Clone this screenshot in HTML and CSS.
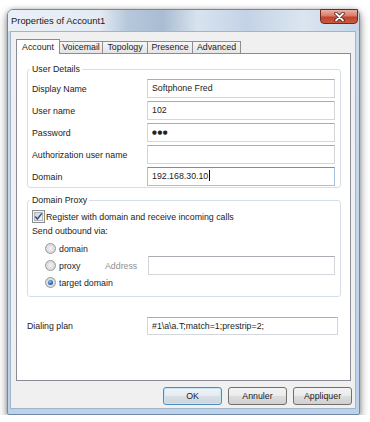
FILE: index.html
```html
<!DOCTYPE html>
<html>
<head>
<meta charset="utf-8">
<link rel="stylesheet" href="styles.css">
</head>
<body>
<div class="window">
  <div class="titlebar">
    <span class="title">Properties of Account1</span>
    <div class="close">
      <svg width="13" height="10" viewBox="0 0 13 10"><path d="M3 1.5 L10 8.5 M10 1.5 L3 8.5" stroke="#4a1a12" stroke-width="3.4" stroke-linecap="round" fill="none"/><path d="M3 1.5 L10 8.5 M10 1.5 L3 8.5" stroke="#ffffff" stroke-width="1.8" stroke-linecap="round" fill="none"/></svg>
    </div>
  </div>
  <div class="client">
    <div class="tabs">
      <div class="tab active t-account">Account</div>
      <div class="tab t-voicemail">Voicemail</div>
      <div class="tab t-topology">Topology</div>
      <div class="tab t-presence">Presence</div>
      <div class="tab t-advanced">Advanced</div>
    </div>
    <div class="panel">
      <fieldset class="group user">
        <legend>User Details</legend>
        <div class="row"><span class="label">Display Name</span><div class="field">Softphone Fred</div></div>
        <div class="row"><span class="label">User name</span><div class="field">102</div></div>
        <div class="row"><span class="label">Password</span><div class="field pw">●●●</div></div>
        <div class="row"><span class="label">Authorization user name</span><div class="field"></div></div>
        <div class="row"><span class="label">Domain</span><div class="field focus">192.168.30.10<span class="caret"></span></div></div>
      </fieldset>
      <fieldset class="group proxy">
        <legend>Domain Proxy</legend>
        <div class="check-row">
          <svg class="checkbox" width="13" height="13" viewBox="0 0 13 13">
            <defs><linearGradient id="cbg" x1="0" y1="0" x2="1" y2="1"><stop offset="0" stop-color="#cbd0d7"/><stop offset="1" stop-color="#f7f7f8"/></linearGradient></defs>
            <rect x="0.5" y="0.5" width="12" height="12" fill="#f4f4f4" stroke="#8e8f8f"/>
            <rect x="2.5" y="2.5" width="8" height="8" fill="url(#cbg)" stroke="#b2b7be"/>
            <path d="M3.2 6.4 L5.4 9 L9.8 3.4" stroke="#3c4f7e" stroke-width="1.5" fill="none"/>
          </svg>
          <span>Register with domain and receive incoming calls</span>
        </div>
        <div class="send">Send outbound via:</div>
        <div class="radio-row"><span class="radio"></span><span>domain</span></div>
        <div class="radio-row proxy-row"><span class="radio"></span><span class="proxy-label">proxy</span><span class="addr">Address</span><div class="field"></div></div>
        <div class="radio-row"><span class="radio on"></span><span>target domain</span></div>
      </fieldset>
      <div class="row dial"><span class="label">Dialing plan</span><div class="field">#1\a\a.T;match=1;prestrip=2;</div></div>
    </div>
    <div class="buttons">
      <div class="btn default">OK</div>
      <div class="btn">Annuler</div>
      <div class="btn">Appliquer</div>
    </div>
  </div>
</div>
</body>
</html>
```
FILE: styles.css
```css
* { box-sizing: border-box; }
body {
  margin: 0;
  background: #ffffff;
  font-family: "Liberation Sans", Arial, sans-serif;
  font-size: 8.8px;
  color: #1c1c1c;
}
.window {
  margin: 9px 0 0 7px;
  width: 353px;
  height: 406px;
  border: 1px solid #7189a6;
  border-radius: 6px 6px 2px 2px;
  background: linear-gradient(to bottom, #c9dbef, #bcd1ea);
  box-shadow: 0 4px 10px rgba(0,0,0,0.45), 0 0 4px rgba(0,0,0,0.2);
  display: flex;
  flex-direction: column;
}
.titlebar {
  height: 21px;
  display: flex;
  justify-content: space-between;
  align-items: flex-start;
  padding-left: 3px;
  border-radius: 5px 5px 0 0;
  background: linear-gradient(to right, #eaf0f6 0%, #e4ebf3 26%, #b7c8dc 34%, #a9bcd2 44%, #d8e3ef 54%, #c3d3e6 68%, #dbe5f0 84%, #c5d6ea 100%);
}
.title {
  font-size: 9.4px;
  line-height: 21px;
  color: #1a1a1a;
}
.close {
  width: 38px;
  height: 15px;
  margin-top: -1px;
  margin-right: 1px;
  border: 1px solid #6d2a1f;
  border-radius: 0 0 4px 4px;
  background: linear-gradient(to bottom, #eab0a2 0%, #d87c68 45%, #c0432c 55%, #cd5a40 100%);
  display: flex;
  align-items: center;
  justify-content: center;
}
.client {
  flex: 1;
  margin: 0 3px 5px 2px;
  border: 1px solid #a2b4c9;
  background: #f0f0f0;
  padding: 7px 4px 3px 5px;
  display: flex;
  flex-direction: column;
}
.tabs {
  display: flex;
  align-items: flex-end;
  height: 15px;
  margin-bottom: -1px;
  position: relative;
  z-index: 1;
}
.tab {
  height: 12px;
  margin-bottom: 1px;
  margin-left: -1px;
  border: 1px solid #8c8e94;
  border-bottom: none;
  background: linear-gradient(to bottom, #f6f6f6, #e4e4e4);
  text-align: center;
  line-height: 11px;
  color: #1c1c1c;
}
.tab.active {
  height: 15px;
  margin-bottom: 0;
  margin-left: 0;
  background: #ffffff;
  padding-top: 1px;
  line-height: 12px;
  border-color: #898c95;
}
.t-account { width: 44px; }
.t-voicemail { width: 44px; }
.t-topology { width: 46px; }
.t-presence { width: 46px; }
.t-advanced { width: 49px; }
.panel {
  flex: 1;
  background: #ffffff;
  border: 1px solid #898c95;
  padding: 10px 9px 0 10px;
  display: flex;
  flex-direction: column;
}
.group {
  margin: 0;
  min-width: 0;
  border: 1px solid #d5dfe5;
  border-radius: 3px;
  padding: 4px 5px 1px 4px;
  display: flex;
  flex-direction: column;
}
.group legend {
  padding: 0 2px;
  margin-left: -2px;
  line-height: 11px;
  color: #222222;
}
.user { gap: 3px; }
.row {
  display: flex;
  align-items: center;
  height: 19px;
}
.label {
  width: 115px;
  flex: none;
  color: #1c1c1c;
}
.field {
  flex: 1;
  height: 19px;
  border: 1px solid #d3d7dc;
  border-top-color: #a9acb3;
  background: #ffffff;
  padding-left: 4px;
  line-height: 17px;
  color: #1c1c1c;
  white-space: nowrap;
}
.field.pw {
  font-family: "DejaVu Sans", sans-serif;
  font-size: 5.5px;
  letter-spacing: 0.6px;
  color: #222222;
}
.field.focus {
  border-color: #a4c2df;
  border-top-color: #6d93bd;
}
.caret {
  display: inline-block;
  width: 1px;
  height: 11px;
  background: #000000;
  vertical-align: -2px;
  margin-left: 1px;
}
.proxy {
  margin-top: 7px;
  padding: 3px 5px 6px 4px;
}
.check-row {
  display: flex;
  align-items: center;
  height: 15px;
  gap: 1px;
}
.checkbox { flex: none; }
.send {
  height: 15px;
  line-height: 15px;
  margin-bottom: 2px;
}
.radio-row {
  display: flex;
  align-items: center;
  height: 15px;
  padding-left: 13px;
}
.proxy-row { height: 19px; }
.radio {
  width: 11px;
  height: 11px;
  flex: none;
  border-radius: 50%;
  border: 1px solid #999a9a;
  background: radial-gradient(circle at 50% 50%, #f4f4f4 0, #dcdcdc 60%, #cfd1d4 100%);
  margin-right: 3px;
  display: flex;
  align-items: center;
  justify-content: center;
}
.radio.on::after {
  content: "";
  width: 5px;
  height: 5px;
  border-radius: 50%;
  background: radial-gradient(circle at 40% 35%, #8fc4ec 0, #2a6cb4 55%, #1b4680 100%);
}
.proxy-label { width: 46px; flex: none; }
.addr { width: 43px; flex: none; color: #8f8f8f; }
.dial {
  margin-top: 20px;
  height: 18px;
}
.dial .label { width: 120px; }
.dial .field { height: 18px; line-height: 16px; margin-right: 3px; }
.buttons {
  display: flex;
  justify-content: flex-end;
  gap: 6px;
  margin-top: 6px;
  margin-right: -1px;
  height: 18px;
}
.btn {
  width: 59px;
  height: 18px;
  border: 1px solid #707070;
  border-radius: 3px;
  background: linear-gradient(to bottom, #f3f3f3 0%, #ebebeb 48%, #dddddd 52%, #d0d0d0 100%);
  text-align: center;
  line-height: 16px;
  color: #1c1c1c;
}
.btn.default {
  border-color: #4f8bbb;
  box-shadow: inset 0 0 0 1px #c9e6f7;
  background: linear-gradient(to bottom, #f0f4f7 0%, #e6ebef 48%, #d8dfe5 52%, #ccd4db 100%);
}
```
